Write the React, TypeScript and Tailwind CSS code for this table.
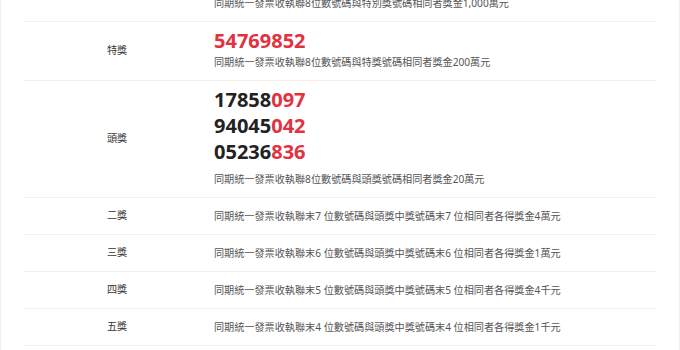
import React from 'react'

type Row = {
  label: string
  numbers?: { head: string; tail: string }[]
  desc: string
}

const rows: Row[] = [
  {
    label: '特獎',
    numbers: [{ head: '', tail: '54769852' }],
    desc: '同期統一發票收執聯8位數號碼與特獎號碼相同者獎金200萬元',
  },
  {
    label: '頭獎',
    numbers: [
      { head: '17858', tail: '097' },
      { head: '94045', tail: '042' },
      { head: '05236', tail: '836' },
    ],
    desc: '同期統一發票收執聯8位數號碼與頭獎號碼相同者獎金20萬元',
  },
  { label: '二獎', desc: '同期統一發票收執聯末7 位數號碼與頭獎中獎號碼末7 位相同者各得獎金4萬元' },
  { label: '三獎', desc: '同期統一發票收執聯末6 位數號碼與頭獎中獎號碼末6 位相同者各得獎金1萬元' },
  { label: '四獎', desc: '同期統一發票收執聯末5 位數號碼與頭獎中獎號碼末5 位相同者各得獎金4千元' },
  { label: '五獎', desc: '同期統一發票收執聯末4 位數號碼與頭獎中獎號碼末4 位相同者各得獎金1千元' },
]

const App: React.FC = () => {
  return (
    <div
      className="h-[350px] overflow-hidden border-x border-[#f1f1f1] bg-white px-[23px]"
      style={{ fontFamily: '"Noto Sans", "Noto Sans CJK TC", sans-serif' }}
    >
      <div className="-mt-[5px]">
        {/* tail of the previous row, scrolled above the window */}
        <div className="flex border-b border-[#f7efe6]">
          <div className="w-[190px]"></div>
          <div className="flex-1 pb-[10px]">
            <p className="text-[10.15px] leading-[16px] text-[#555]">
              同期統一發票收執聯8位數號碼與特別獎號碼相同者獎金1,000萬元
            </p>
          </div>
        </div>

        {rows.map((row) => (
          <div key={row.label} className="flex border-b border-[#f7efe6]">
            <div className="flex w-[190px] items-center justify-center pr-[4px] text-[10.15px] text-[#333]">
              {row.label}
            </div>
            <div className={row.numbers ? 'flex-1 pb-[10px] pt-[6px]' : 'flex-1 py-[10px]'}>
              {row.numbers?.map((n) => (
                <p
                  key={n.head + n.tail}
                  className="text-[20px] font-bold leading-[26px] text-[#222]"
                >
                  {n.head}
                  <span className="text-[#e2323f]">{n.tail}</span>
                </p>
              ))}
              <p
                className={
                  row.numbers && row.numbers.length > 1
                    ? 'mt-[6px] text-[10.15px] leading-[16px] text-[#555]'
                    : 'text-[10.15px] leading-[16px] text-[#555]'
                }
              >
                {row.desc}
              </p>
            </div>
          </div>
        ))}
      </div>
    </div>
  )
}

export default App
